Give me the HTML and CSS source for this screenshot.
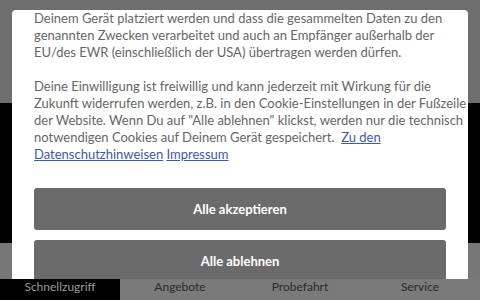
FILE: index.html
```html
<!DOCTYPE html>
<html lang="de">
<head>
<meta charset="utf-8">
<title>Cookie-Einstellungen</title>
<link rel="stylesheet" href="styles.css">
</head>
<body>
<div class="page">
  <div class="band band-top"></div>
  <div class="band band-mid"></div>
  <div class="band band-low"></div>
  <nav class="tabs">
    <a class="tab active">Schnellzugriff</a>
    <a class="tab">Angebote</a>
    <a class="tab">Probefahrt</a>
    <a class="tab">Service</a>
  </nav>
</div>
<div class="modal">
  <p class="text">Deinem Gerät platziert werden und dass die gesammelten Daten zu den<br>genannten Zwecken verarbeitet und auch an Empfänger außerhalb der<br>EU/des EWR (einschließlich der USA) übertragen werden dürfen.</p>
  <p class="text">Deine Einwilligung ist freiwillig und kann jederzeit mit Wirkung für die<br>Zukunft widerrufen werden, z.B. in den Cookie-Einstellungen in der Fußzeile<br>der Website. Wenn Du auf "Alle ablehnen" klickst, werden nur die technisch<br>notwendigen Cookies auf Deinem Gerät gespeichert. &nbsp;<a class="link" href="#">Zu den<br>Datenschutzhinweisen</a> <a class="link" href="#">Impressum</a></p>
  <div class="actions">
    <button class="btn">Alle akzeptieren</button>
    <button class="btn">Alle ablehnen</button>
  </div>
</div>
</body>
</html>
```
FILE: styles.css
```css
html, body {
  margin: 0;
  padding: 0;
}
body {
  width: 480px;
  height: 300px;
  overflow: hidden;
  position: relative;
  font-family: Lato, "Open Sans", sans-serif;
}
.page {
  display: flex;
  flex-direction: column;
  height: 300px;
}
.band-top { height: 103px; background: #6e6e6e; }
.band-mid { height: 140px; background: #000; }
.band-low { height: 36px; background: #777; }
.tabs {
  display: grid;
  grid-template-columns: repeat(4, 1fr);
  height: 21px;
  background: #7a7a7a;
}
.tab {
  display: flex;
  align-items: center;
  justify-content: center;
  font-size: 12px;
  color: #2a2a2a;
  padding-bottom: 6px;
}
.tab.active {
  background: #000;
  color: #9a9a9a;
}
.modal {
  position: absolute;
  left: 12px;
  top: 10px;
  width: 412px;
  height: 269px;
  padding: 0 22px;
  background: #fff;
  border-radius: 4px 4px 0 0;
  overflow: hidden;
}
.text {
  margin: 0 0 17px;
  font-size: 13px;
  line-height: 17px;
  color: #666;
  white-space: nowrap;
}
.text:first-child { margin-top: 0; }
.link {
  color: #3b59ad;
  text-decoration: underline;
}
.actions {
  display: flex;
  flex-direction: column;
  gap: 10px;
  margin-top: 25px;
}
.btn {
  height: 42px;
  border: 0;
  border-radius: 3px;
  background: #6b6b6b;
  color: #fff;
  font-family: Lato, "Open Sans", sans-serif;
  font-weight: 700;
  font-size: 13px;
}
```
